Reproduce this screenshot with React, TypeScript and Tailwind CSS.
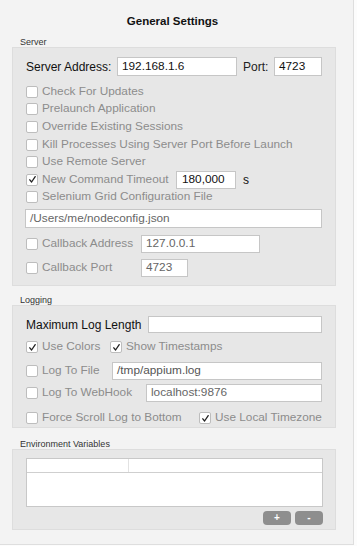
import React from "react";

const font = { fontFamily: '"Liberation Sans", Arial, sans-serif' };

function Box({ checked = false }: { checked?: boolean }) {
  return (
    <span className="inline-flex h-[12px] w-[12px] shrink-0 items-center justify-center rounded-[2px] border border-[#bdbdbd] bg-white">
      {checked && (
        <svg width="9" height="9" viewBox="0 0 9 9">
          <path d="M1.8 4.8 L3.6 7 L7.2 1.6" fill="none" stroke="#222" strokeWidth="1.3" strokeLinecap="round" strokeLinejoin="round" />
        </svg>
      )}
    </span>
  );
}

function Check({ label, checked = false, w }: { label: string; checked?: boolean; w?: string }) {
  return (
    <span className={`flex shrink-0 items-center gap-[4px] ${w ?? ""}`}>
      <Box checked={checked} />
      <span className="text-[11.8px] text-[#8c8c8c] leading-none whitespace-nowrap">{label}</span>
    </span>
  );
}

function Input({ value, className, color = "#111" }: { value: string; className: string; color?: string }) {
  return (
    <div
      className={`flex shrink-0 items-center border border-[#c6c6c6] bg-white pl-[4px] text-[11.8px] leading-none whitespace-nowrap ${className}`}
      style={{ color }}
    >
      {value}
    </div>
  );
}

function Legend({ text, className }: { text: string; className: string }) {
  return <div className={`h-[10px] pl-[8px] text-[9px] leading-[10px] text-[#333] ${className}`}>{text}</div>;
}

export default function App() {
  return (
    <div className="h-[546px] w-[357px] bg-[#fcfcfc]" style={font}>
      <div className="flex h-[545px] w-[354px] flex-col border-r border-b border-[#dedede] bg-[#f3f3f3] px-[12px]">
        <div className="pt-[14px] pr-[8px] text-center text-[11.5px] font-bold leading-[14px] text-[#111]">General Settings</div>

        <Legend text="Server" className="mt-[9px]" />
        <div className="flex h-[239px] w-[324px] flex-col border border-[#dddddd] bg-[#e7e7e7] pl-[13px] pt-[9px]">
          <div className="flex h-[19px] items-center">
            <span className="w-[91px] shrink-0 text-[12px] text-[#111] leading-none">Server Address:</span>
            <Input value="192.168.1.6" className="h-[19px] w-[120px]" />
            <span className="ml-[6px] w-[31px] shrink-0 text-[12px] text-[#222] leading-none">Port:</span>
            <Input value="4723" className="h-[19px] w-[48px]" />
          </div>
          <div className="mt-[7px] flex flex-col">
            <div className="flex h-[17.6px] items-center"><Check label="Check For Updates" /></div>
            <div className="flex h-[17.6px] items-center"><Check label="Prelaunch Application" /></div>
            <div className="flex h-[17.6px] items-center"><Check label="Override Existing Sessions" /></div>
            <div className="flex h-[17.6px] items-center"><Check label="Kill Processes Using Server Port Before Launch" /></div>
            <div className="flex h-[17.6px] items-center"><Check label="Use Remote Server" /></div>
            <div className="flex h-[17.6px] items-center">
              <Check label="New Command Timeout" checked w="w-[150px]" />
              <Input value="180,000" className="h-[18px] w-[60px] pl-[5px]" />
              <span className="ml-[7px] text-[12px] text-[#111] leading-none">s</span>
            </div>
            <div className="flex h-[17.6px] items-center"><Check label="Selenium Grid Configuration File" /></div>
          </div>
          <Input value="/Users/me/nodeconfig.json" className="mt-[3px] h-[19px] w-[297px] -ml-[1px]" color="#666" />
          <div className="mt-[7px] flex h-[18px] items-center">
            <Check label="Callback Address" w="w-[115px]" />
            <Input value="127.0.0.1" className="h-[18px] w-[119px]" color="#666" />
          </div>
          <div className="mt-[6px] flex h-[18px] items-center">
            <Check label="Callback Port" w="w-[115px]" />
            <Input value="4723" className="h-[18px] w-[47px]" color="#666" />
          </div>
        </div>

        <Legend text="Logging" className="mt-[9px]" />
        <div className="flex h-[123px] w-[324px] flex-col border border-[#dddddd] bg-[#e7e7e7] pl-[13px] pt-[10px]">
          <div className="flex h-[17px] items-center">
            <span className="w-[122px] shrink-0 text-[12px] text-[#111] leading-none">Maximum Log Length</span>
            <Input value="" className="h-[17px] w-[174px]" />
          </div>
          <div className="mt-[5px] flex h-[18px] items-center">
            <Check label="Use Colors" checked w="w-[84px]" />
            <Check label="Show Timestamps" checked />
          </div>
          <div className="mt-[6px] flex h-[18px] items-center">
            <Check label="Log To File" w="w-[86px]" />
            <Input value="/tmp/appium.log" className="h-[18px] w-[210px]" color="#555" />
          </div>
          <div className="mt-[4px] flex h-[18px] items-center">
            <Check label="Log To WebHook" w="w-[120px]" />
            <Input value="localhost:9876" className="h-[18px] w-[176px]" color="#666" />
          </div>
          <div className="mt-[7px] flex h-[18px] items-center">
            <Check label="Force Scroll Log to Bottom" w="w-[173px]" />
            <Check label="Use Local Timezone" checked />
          </div>
        </div>

        <Legend text="Environment Variables" className="mt-[11px]" />
        <div className="flex h-[81px] w-[324px] flex-col border border-[#dddddd] bg-[#e7e7e7] pl-[13px] pt-[8px]">
          <div className="flex h-[49px] w-[297px] flex-col border border-[#c8c8c8] bg-white">
            <div className="flex h-[14px] border-b border-[#cfcfcf]">
              <div className="w-[102px] border-r border-[#e2e2e2]" />
              <div className="flex-1" />
            </div>
          </div>
          <div className="mt-[4px] flex w-[297px] justify-end gap-[4px]">
            <div className="flex h-[14px] w-[28px] items-center justify-center rounded-[4px] bg-[#8e8e8e] text-[10px] font-bold leading-none text-white">+</div>
            <div className="flex h-[14px] w-[28px] items-center justify-center rounded-[4px] bg-[#8e8e8e] text-[10px] font-bold leading-none text-white">-</div>
          </div>
        </div>
      </div>
    </div>
  );
}
